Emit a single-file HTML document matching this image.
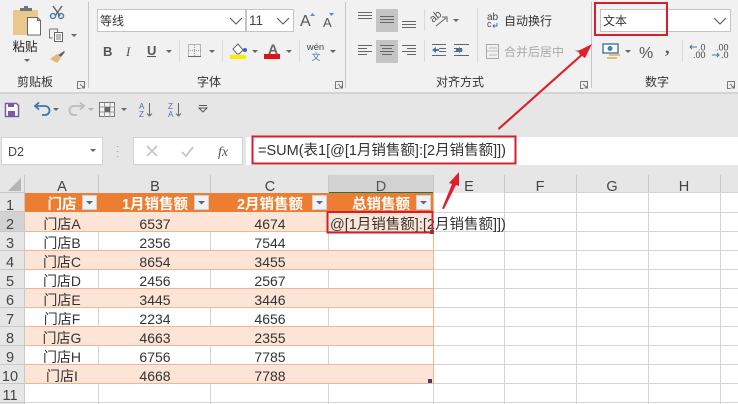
<!DOCTYPE html>
<html lang="zh"><head><meta charset="utf-8"><title>Excel</title>
<style>
html,body{margin:0;padding:0;background:#fff}
svg{display:block}
text{font-family:"Liberation Sans","Noto Sans CJK SC",sans-serif;fill:#333}
.c{text-anchor:middle}
.t{font-size:14px;fill:#333;text-anchor:middle}
.h{font-size:14.5px;fill:#444;text-anchor:middle}
.w{font-size:14.5px;fill:#fff;font-weight:bold;text-anchor:middle}
</style></head><body>
<svg width="738" height="404" viewBox="0 0 738 404" xmlns="http://www.w3.org/2000/svg">
<defs>
<g id="dd"><path d="M0 0h6l-3 3z" fill="#666"/></g>
<g id="launch"><path d="M.5 .5h7v7M.5 .5v7h3M3 3l4 4M7 4.500V7H4.500" fill="none" stroke="#777" stroke-width="1"/></g>
<g id="fb"><rect x=".5" y=".5" width="14" height="14" fill="#eef2f8" stroke="#d0d0d0"/><path d="M4 6h7l-3.500 3.500z" fill="#666"/></g>
</defs>
<!-- ribbon -->
<rect width="738" height="92" fill="#f1f1f1"/>
<rect y="92" width="738" height="2" fill="#d4d4d4"/>
<rect y="94" width="738" height="98" fill="#e6e6e6"/>
<!-- group separators -->
<g fill="#c6c6c6"><rect x="88" y="2" width="1" height="86"/><rect x="345" y="2" width="1" height="86"/><rect x="591" y="2" width="1" height="86"/></g>
<g fill="#dadada"><rect x="179" y="40" width="1" height="22"/><rect x="222" y="40" width="1" height="22"/><rect x="299" y="40" width="1" height="22"/><rect x="424" y="9" width="1" height="22"/><rect x="424" y="40" width="1" height="22"/><rect x="477" y="8" width="1" height="55"/><rect x="682" y="40" width="1" height="22"/></g>
<!-- clipboard -->
<rect x="13" y="10" width="25" height="25" rx="1" fill="#eac88d"/>
<path d="M20 11v-3h4v-2h4v2h4v3z" fill="#6d7680"/>
<path d="M27.500 17.500h10l3 3v14.500h-13z" fill="#fff" stroke="#666"/>
<path d="M37.500 17.500v3h3" fill="none" stroke="#666"/>
<text x="25" y="51" class="c" style="font-size:12.500px;fill:#222">粘贴</text>
<use href="#dd" x="24" y="59"/>
<path d="M53 6l7 10M62 6l-7 10" stroke="#666" stroke-width="1.500"/>
<circle cx="53" cy="16" r="2.500" fill="none" stroke="#4c7da9" stroke-width="1.500"/><circle cx="61" cy="16" r="2.500" fill="none" stroke="#4c7da9" stroke-width="1.500"/>
<path d="M49.500 29h8v8M49.500 29v9h3" fill="none" stroke="#777"/>
<rect x="54.500" y="32.500" width="8" height="9" fill="#fff" stroke="#666"/>
<path d="M56 35h5M56 37h5M56 39h5" stroke="#777"/>
<use href="#dd" x="71" y="34"/>
<path d="M50 59l7-5 4 4-4 5z" fill="#e2b877"/>
<path d="M58 55l6-4 1 1-4 5z" fill="#666"/>
<text x="17" y="86" style="font-size:12px;fill:#333">剪贴板</text>
<use href="#launch" x="77" y="81"/>
<!-- font group -->
<rect x="97.500" y="9.500" width="148" height="22" fill="#fff" stroke="#c4c4c4"/>
<rect x="246.500" y="9.500" width="47" height="22" fill="#fff" stroke="#c4c4c4"/>
<text x="100" y="25" style="font-size:12px;fill:#333">等线</text>
<text x="249" y="25" style="font-size:13.500px;fill:#444">11</text>
<path d="M230 18l6 6 6-6M277 18l6 6 6-6" fill="none" stroke="#555"/>
<text x="300" y="26" style="font-size:16px;fill:#555">A</text>
<path d="M310 16l2.500-3 2.500 3z" fill="#5e8fb9"/>
<text x="323" y="27" style="font-size:13px;fill:#555">A</text>
<path d="M329 13h5l-2.500 3z" fill="#5e8fb9"/>
<text x="103" y="56" style="font-size:13px;font-weight:bold;fill:#555">B</text>
<text x="126" y="56" style="font-size:13px;font-style:italic;font-family:'Liberation Serif',serif;fill:#555">I</text>
<text x="147" y="55" style="font-size:13px;font-weight:bold;fill:#555">U</text>
<rect x="147" y="56" width="9" height="1" fill="#555"/>
<use href="#dd" x="166" y="50"/>
<rect x="188.500" y="44.500" width="12" height="12" fill="none" stroke="#777" stroke-dasharray="1 1"/>
<path d="M194.500 45v12M188 50.500h13" stroke="#999" stroke-dasharray="1 1"/><rect x="188" y="56" width="13" height="1" fill="#666"/>
<use href="#dd" x="209" y="50"/>
<path d="M233 49l5-5 5 6-4 4h-2z" fill="#fff" stroke="#666"/><circle cx="245" cy="50" r="2" fill="#3f62b5"/>
<rect x="230" y="55" width="16" height="4" fill="#f6f000"/>
<use href="#dd" x="252" y="50"/>
<text x="273" y="54" class="c" style="font-size:14px;font-weight:bold;fill:#666">A</text>
<rect x="264" y="54" width="16" height="5" fill="#e0101c"/>
<use href="#dd" x="286" y="50"/>
<text x="315.500" y="50" class="c" style="font-size:9.500px;fill:#444">wén</text>
<text x="316" y="60" class="c" style="font-size:9px;fill:#3a78ad">文</text>
<use href="#dd" x="330" y="50"/>
<text x="209" y="86" class="c" style="font-size:12px;fill:#333">字体</text>
<use href="#launch" x="335" y="81"/>
<!-- alignment -->
<rect x="376" y="9" width="22" height="23" fill="#c5c5c5"/>
<rect x="376" y="40" width="22" height="23" fill="#c5c5c5"/>
<g stroke="#666" stroke-width="1" fill="none">
<path d="M358 12.500h14M358 15.500h14M358 18.500h14"/>
<path d="M380 16.500h14M380 19.500h14M380 22.500h14"/>
<path d="M402 21.500h14M402 24.500h14M402 27.500h14"/>
<path d="M358 45.500h14M358 48.500h9M358 51.500h14M358 54.500h9"/>
<path d="M380 45.500h14M382 48.500h10M380 51.500h14M382 54.500h10"/>
<path d="M402 45.500h14M407 48.500h9M402 51.500h14M407 54.500h9"/>
<path d="M432 44.500h14M439 48.500h7M439 51.500h7M432 55.500h14"/>
<path d="M454 44.500h15M454 48.500h8M454 51.500h8M454 55.500h15"/>
<path d="M436 26l10-8M442 17l5 0 0 5"/>
</g>
<text x="433" y="23" transform="rotate(-40 433 23)" style="font-size:11px;fill:#555">ab</text>
<use href="#dd" x="453" y="19"/>
<path d="M432 50l4-3v2h3v2h-3v2z" fill="#3a78ad"/>
<path d="M461 50l-4-3v2h-3v2h3v2z" fill="#3a78ad" transform="translate(2 0)"/>
<text x="487" y="20" style="font-size:10px;fill:#444">ab</text>
<text x="487" y="27" style="font-size:9px;fill:#444">c</text>
<path d="M497 23v3h-4m1.500-1.500l-1.500 1.500 1.500 1.500" fill="none" stroke="#3a78ad"/>
<text x="504" y="25" style="font-size:12px;fill:#333">自动换行</text>
<rect x="486.500" y="44.500" width="12" height="14" fill="none" stroke="#aaa"/>
<path d="M487 51h11M489 48h8M489 55h8" stroke="#bbb"/>
<text x="504" y="56" style="font-size:12px;fill:#aaa">合并后居中</text>
<use href="#dd" x="575" y="50" opacity=".5"/>
<text x="460" y="86" class="c" style="font-size:12px;fill:#333">对齐方式</text>
<use href="#launch" x="580" y="81"/>
<!-- number -->
<rect x="600.500" y="9.500" width="130" height="22" fill="#fff" stroke="#c4c4c4"/>
<text x="603" y="25" style="font-size:12px;fill:#333">文本</text>
<path d="M714 18l6 6 6-6" fill="none" stroke="#555"/>
<rect x="603" y="44" width="15" height="9" fill="#fff" stroke="#4c7da9" stroke-width="1.500"/>
<circle cx="610" cy="48.500" r="2.500" fill="#4c7da9"/>
<path d="M609 55h11M607 58h10" stroke="#e6b566" stroke-width="1.800"/>
<use href="#dd" x="625" y="50"/>
<text x="639" y="58" style="font-size:16px;fill:#555">%</text>
<text x="665" y="53" style="font-size:18px;font-weight:bold;font-family:'Liberation Serif',serif;fill:#555">,</text>
<text x="698" y="50.500" style="font-size:9px;fill:#444">.0</text>
<text x="693" y="58" style="font-size:9px;fill:#444">.00</text>
<path d="M697 47h-7m2-2l-2 2 2 2" fill="none" stroke="#3a78ad"/>
<text x="716" y="50.500" style="font-size:9px;fill:#444">.00</text>
<text x="721" y="58" style="font-size:9px;fill:#444">.0</text>
<path d="M712 55h7m-2-2l2 2-2 2" fill="none" stroke="#3a78ad"/>
<text x="657" y="86" class="c" style="font-size:12px;fill:#333">数字</text>
<use href="#launch" x="727" y="81"/>
<!-- QAT -->
<path d="M5.500 103.500h11l2 2v11h-13z" fill="#fff" stroke="#7b5aa6" stroke-width="1.500"/>
<rect x="8" y="103" width="6" height="4" fill="#7b5aa6"/><rect x="8" y="111" width="7" height="5" fill="#7b5aa6"/>
<path d="M36 106h9a4 4 0 0 1 0 9h-3M39 102.500l-4 3.500 4 3.500" fill="none" stroke="#3a78ad" stroke-width="1.800"/>
<use href="#dd" x="53" y="108"/>
<path d="M83 106h-9a4 4 0 0 0 0 9h3M80 102.500l4 3.500-4 3.500" fill="none" stroke="#bbb" stroke-width="1.800"/>
<use href="#dd" x="88" y="108" opacity=".4"/>
<rect x="99.500" y="102.500" width="15" height="14" fill="#f3f3f3" stroke="#777"/>
<path d="M100 107h15M100 112h15M104.500 103v14M110 103v14" stroke="#999"/><rect x="105" y="107" width="5" height="5" fill="#666"/>
<use href="#dd" x="121" y="108"/>
<text x="139" y="109" style="font-size:8px;fill:#3a78ad">A</text><text x="139" y="117" style="font-size:8px;fill:#7b5aa6">Z</text>
<path d="M149.500 103v13M147 113.500l2.500 2.500 2.500-2.500" fill="none" stroke="#666"/>
<text x="168" y="109" style="font-size:8px;fill:#7b5aa6">Z</text><text x="168" y="117" style="font-size:8px;fill:#3a78ad">A</text>
<path d="M178.500 103v13M176 113.500l2.500 2.500 2.500-2.500" fill="none" stroke="#666"/>
<path d="M199 105.500h8" stroke="#555"/><path d="M199 108h8l-4 4z" fill="none" stroke="#555"/>
<!-- formula bar -->
<rect x="1.500" y="137.500" width="101" height="27" fill="#fff" stroke="#d2d2d2"/>
<text x="8" y="156" style="font-size:12.500px;fill:#444">D2</text>
<use href="#dd" x="90" y="149"/>
<path d="M117.500 146v1M117.500 151v1M117.500 156v1" stroke="#aaa" stroke-width="1.500"/>
<rect x="133.500" y="137.500" width="109" height="27" fill="#fff" stroke="#d2d2d2"/>
<rect x="246" y="137" width="492" height="28" fill="#fff"/>
<path d="M147 146l10 10M157 146l-10 10" stroke="#c4c4c4" stroke-width="1.600"/>
<path d="M182 152l4 4 7-9" fill="none" stroke="#c4c4c4" stroke-width="1.800"/>
<text x="218" y="156" style="font-size:14px;font-style:italic;font-family:'Liberation Serif',serif;fill:#555">fx</text>
<text x="258" y="155" style="font-size:14.500px;fill:#333">=SUM(表1[@[1月销售额]:[2月销售额]])</text>
<!-- sheet -->
<rect x="0" y="175" width="738" height="229" fill="#fff"/>
<!-- headers -->
<rect x="0" y="175" width="25" height="229" fill="#e6e6e6"/>
<rect x="25" y="175" width="713" height="18" fill="#e6e6e6"/>
<rect x="328" y="175" width="105" height="18" fill="#d2d2d2"/>
<rect x="328" y="192" width="105" height="1.500" fill="#217346"/>
<rect x="0" y="212" width="25" height="19" fill="#d2d2d2"/>
<rect x="24" y="212" width="1.500" height="19" fill="#217346"/>
<path d="M21 178v13H8z" fill="#b4b4b4"/>
<g fill="#c8c8c8">
<rect x="98" y="175" width="1" height="18"/><rect x="210" y="175" width="1" height="18"/><rect x="328" y="175" width="1" height="18"/><rect x="433" y="175" width="1" height="18"/><rect x="504" y="175" width="1" height="18"/><rect x="576" y="175" width="1" height="18"/><rect x="648" y="175" width="1" height="18"/><rect x="720" y="175" width="1" height="18"/>
<rect x="0" y="192" width="25" height="1"/><rect x="0" y="211" width="25" height="1"/><rect x="0" y="231" width="25" height="1"/><rect x="0" y="250" width="25" height="1"/><rect x="0" y="269" width="25" height="1"/><rect x="0" y="288" width="25" height="1"/><rect x="0" y="307" width="25" height="1"/><rect x="0" y="326" width="25" height="1"/><rect x="0" y="345" width="25" height="1"/><rect x="0" y="364" width="25" height="1"/><rect x="0" y="383" width="25" height="1"/><rect x="0" y="402" width="25" height="1"/>
<rect x="24" y="175" width="1" height="229"/>
</g>
<!-- grid right of table and below -->
<g fill="#d4d4d4">
<rect x="504" y="193" width="1" height="211"/><rect x="576" y="193" width="1" height="211"/><rect x="648" y="193" width="1" height="211"/><rect x="720" y="193" width="1" height="211"/>
<rect x="433" y="212" width="305" height="1"/><rect x="433" y="231" width="305" height="1"/><rect x="433" y="250" width="305" height="1"/><rect x="433" y="269" width="305" height="1"/><rect x="433" y="288" width="305" height="1"/><rect x="433" y="307" width="305" height="1"/><rect x="433" y="326" width="305" height="1"/><rect x="433" y="345" width="305" height="1"/><rect x="433" y="364" width="305" height="1"/><rect x="25" y="383" width="713" height="1"/><rect x="25" y="402" width="713" height="1"/>
<rect x="505" y="192" width="233" height="1"/>
<rect x="98" y="384" width="1" height="20"/><rect x="210" y="384" width="1" height="20"/><rect x="328" y="384" width="1" height="20"/><rect x="433" y="384" width="1" height="20"/>
<rect x="98" y="231" width="1" height="19"/><rect x="210" y="231" width="1" height="19"/><rect x="328" y="231" width="1" height="19"/>
<rect x="98" y="269" width="1" height="19"/><rect x="210" y="269" width="1" height="19"/><rect x="328" y="269" width="1" height="19"/>
<rect x="98" y="307" width="1" height="19"/><rect x="210" y="307" width="1" height="19"/><rect x="328" y="307" width="1" height="19"/>
<rect x="98" y="345" width="1" height="19"/><rect x="210" y="345" width="1" height="19"/><rect x="328" y="345" width="1" height="19"/>
</g>
<!-- table -->
<rect x="25" y="193" width="408" height="19" fill="#ed7d31"/>
<g fill="#fce4d6"><rect x="25" y="212" width="408" height="19"/><rect x="25" y="250" width="408" height="19"/><rect x="25" y="288" width="408" height="19"/><rect x="25" y="326" width="408" height="19"/><rect x="25" y="364" width="408" height="19"/></g>
<g fill="#f2b58f"><rect x="25" y="231" width="408" height="1"/><rect x="25" y="250" width="408" height="1"/><rect x="25" y="269" width="408" height="1"/><rect x="25" y="288" width="408" height="1"/><rect x="25" y="307" width="408" height="1"/><rect x="25" y="326" width="408" height="1"/><rect x="25" y="345" width="408" height="1"/><rect x="25" y="364" width="408" height="1"/><rect x="25" y="383" width="408" height="1"/><rect x="433" y="193" width="1" height="191"/></g>
<use href="#fb" x="82" y="195"/><use href="#fb" x="194" y="195"/><use href="#fb" x="312" y="195"/><use href="#fb" x="416" y="195"/>
<rect x="428" y="379" width="4" height="4" fill="#3d3d80"/>
<!-- col labels -->
<text x="62" y="191" class="h">A</text><text x="155" y="191" class="h">B</text><text x="270" y="191" class="h">C</text><text x="381" y="191" class="h" style="fill:#555">D</text><text x="469" y="191" class="h">E</text><text x="540" y="191" class="h">F</text><text x="612" y="191" class="h">G</text><text x="684" y="191" class="h">H</text>
<!-- row labels -->
<g transform="translate(0 1)">
<text x="10" y="209" class="h">1</text><text x="10" y="228" class="h">2</text><text x="10" y="247" class="h">3</text><text x="10" y="266" class="h">4</text><text x="10" y="285" class="h">5</text><text x="10" y="304" class="h">6</text><text x="10" y="323" class="h">7</text><text x="10" y="342" class="h">8</text><text x="10" y="361" class="h">9</text><text x="10" y="380" class="h">10</text><text x="10" y="399" class="h">11</text>
</g>
<!-- table head -->
<text x="62" y="209" class="w">门店</text><text x="155" y="209" class="w">1月销售额</text><text x="270" y="209" class="w">2月销售额</text><text x="381" y="209" class="w">总销售额</text>
<!-- table body -->
<g transform="translate(0 1)">
<text x="62" y="228" class="t">门店A</text><text x="155" y="228" class="t">6537</text><text x="270" y="228" class="t">4674</text>
<text x="62" y="247" class="t">门店B</text><text x="155" y="247" class="t">2356</text><text x="270" y="247" class="t">7544</text>
<text x="62" y="266" class="t">门店C</text><text x="155" y="266" class="t">8654</text><text x="270" y="266" class="t">3455</text>
<text x="62" y="285" class="t">门店D</text><text x="155" y="285" class="t">2456</text><text x="270" y="285" class="t">2567</text>
<text x="62" y="304" class="t">门店E</text><text x="155" y="304" class="t">3445</text><text x="270" y="304" class="t">3446</text>
<text x="62" y="323" class="t">门店F</text><text x="155" y="323" class="t">2234</text><text x="270" y="323" class="t">4656</text>
<text x="62" y="342" class="t">门店G</text><text x="155" y="342" class="t">4663</text><text x="270" y="342" class="t">2355</text>
<text x="62" y="361" class="t">门店H</text><text x="155" y="361" class="t">6756</text><text x="270" y="361" class="t">7785</text>
<text x="62" y="380" class="t">门店I</text><text x="155" y="380" class="t">4668</text><text x="270" y="380" class="t">7788</text>
</g>
<!-- D2 overflow text -->
<rect x="433" y="213" width="71" height="18" fill="#fff"/>
<text x="330" y="229" style="font-size:14.500px;fill:#333">@[1月销售额]:[2月销售额]])</text>
<!-- red annotations -->
<g fill="none" stroke="#d2202e" stroke-width="2">
<rect x="595" y="3" width="72" height="32"/>
<rect x="252.500" y="136.500" width="263" height="27"/>
<rect x="327.500" y="212" width="105" height="20.500"/>
</g>
<path d="M498 128L580 55l-2-4 14-7-7 14-3-2L499 130z" fill="#dc202c"/>
<path d="M442 208.500L452 184l-3-1 10-11 0 14-3-1L444 209z" fill="#dc202c"/>
<rect x="430" y="230" width="4" height="4" fill="#8a3a3a"/>
</svg>
</body></html>
